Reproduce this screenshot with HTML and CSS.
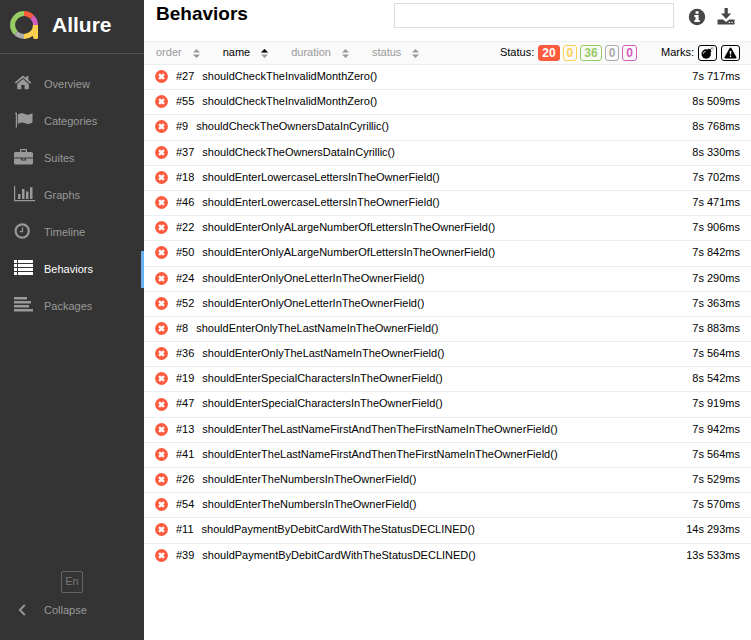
FILE: index.html
```
<!DOCTYPE html>
<html lang="en">
<head>
<meta charset="utf-8">
<title>Allure Report</title>
<link rel="stylesheet" href="styles.css">
</head>
<body>
<svg class="defs" aria-hidden="true">
  <symbol id="fail" viewBox="0 0 14 14"><circle cx="7" cy="7" r="6.9" fill="#fd5a3e"/><path d="M4.400 4.400l5.200 5.200M9.600 4.400L4.400 9.600" stroke="#fff" stroke-width="2.500"/></symbol>
  <symbol id="sort" viewBox="0 0 7 9"><path d="M0 3.6L3.5 0 7 3.6zM0 5.4h7L3.5 9z" fill="#999"/></symbol>
  <symbol id="sort-asc" viewBox="0 0 7 9"><path d="M0 3.6L3.5 0 7 3.6zM0 5.4h7L3.5 9z" fill="#999"/><path d="M0 3.6L3.5 0 7 3.6z" fill="#000"/></symbol>
</svg>
<div class="app">
  <aside class="side">
    <a class="brand" href="#">
      <svg class="logo" viewBox="0 0 28 28" fill="none" stroke-width="5">
        <path d="M14 2.500A11.500 11.500 0 0 1 22.100 5.900" stroke="#fd5a3e"/>
        <path d="M22.100 5.900A11.500 11.500 0 0 1 25.500 14" stroke="#d35ebe"/>
        <path d="M5.900 22.100A11.500 11.500 0 0 1 5.900 5.900 11.500 11.500 0 0 1 14 2.500" stroke="#97cc64"/>
        <path d="M14 25.500A11.500 11.500 0 0 1 5.900 22.100" stroke="#aaa"/>
        <path d="M23 14H28V26.500Q28 28 26.500 28H25Q23 28 23 26V24.800Q19 28 14 28V23Q22.500 22 23 14z" fill="#ffd050"/>
      </svg>
      <span>Allure</span>
    </a>
    <nav class="menu">
      <a class="item" href="#"><svg class="icon" viewBox="0 0 20 16"><path d="M.8 7.600L8.300 1Q9 .5 9.700 1L12 3V1.200H14.400V5.100L17.200 7.600 16.100 8.800 9 2.700 1.900 8.800z"/><path d="M3.200 8.900L9 4 14.800 8.900V14.300H10.600V10H7.400V14.300H3.200z"/></svg>Overview</a>
      <a class="item" href="#"><svg class="icon" viewBox="0 0 20 16"><path d="M1 1.500a1 1 0 0 1 2 0V15.500H1.800V2.500z"/><path d="M3.800 2.600C7 .8 9 .8 11.500 2.200 14 3.400 16 2.400 18.500 1.300V10.500C16 12 13.500 12.500 11 11.200 8.500 10 6.500 10.600 3.800 12z"/></svg>Categories</a>
      <a class="item" href="#"><svg class="icon" viewBox="0 0 20 16"><path fill-rule="evenodd" d="M6 3V1Q6 0 7 0H12Q13 0 13 1V3H17.500Q19 3 19 4.500V8.500H0V4.500Q0 3 1.500 3zM7.300 3H11.700V1.300H7.300zM0 9.500H7V11.500H12V9.500H19V14Q19 15.500 17.500 15.500H1.500Q0 15.500 0 14zM8.200 9.500H10.800V10.500H8.200z"/></svg>Suites</a>
      <a class="item" href="#"><svg class="icon" viewBox="0 0 20 16"><path d="M0 0H1.200V14H21V15.300H0zM4 8H6.500V13H4zM8 3H10.500V13H8zM12 5.500H14.500V13H12zM16 1.200H18.500V13H16z"/></svg>Graphs</a>
      <a class="item" href="#"><svg class="icon" viewBox="0 0 20 16"><circle cx="8.200" cy="8" r="6.600" fill="none" stroke="currentColor" stroke-width="2.200"/><path d="M7.800 4.500H9.100V9.300H5.600V8H7.800z"/></svg>Timeline</a>
      <a class="item active" href="#" aria-current="page"><svg class="icon" viewBox="0 0 20 16"><path d="M0 0H3V3H0zM4 0H19V3H4zM0 4H3V7H0zM4 4H19V7H4zM0 8H3V11H0zM4 8H19V11H4zM0 12H3V15H0zM4 12H19V15H4z"/></svg>Behaviors</a>
      <a class="item" href="#"><svg class="icon" viewBox="0 0 20 16"><path d="M0 0H13V2.600H0zM0 4H17V6.600H0zM0 8H15V10.600H0zM0 12H19V14.600H0z"/></svg>Packages</a>
    </nav>
    <div class="foot">
      <button class="lang" type="button">En</button>
      <button class="collapse" type="button"><svg class="icon" viewBox="0 0 20 16"><path d="M10.800 3L5.800 8 10.800 13" fill="none" stroke="currentColor" stroke-width="1.800"/></svg>Collapse</button>
    </div>
  </aside>
  <main class="main">
    <header class="head">
      <h1>Behaviors</h1>
      <input class="search" type="text" aria-label="Search">
      <button class="tool" type="button" aria-label="Show groups info"><svg viewBox="0 0 18 18"><circle cx="9" cy="9" r="8.200" fill="#484848"/><path d="M7.600 3.200H10.600V5.700H7.600zM6.400 7H10.600V12H11.700V14H6.400V12H7.500V9H6.400z" fill="#fff"/></svg></button>
      <button class="tool" type="button" aria-label="Download CSV"><svg viewBox="0 0 18 18"><path fill-rule="evenodd" d="M7.500 0H10.800V5.500H14.300L9.100 11 4 5.500H7.500zM.5 11.500H6L9.100 14 12.200 11.500H17.500V16.500H.5zM11.700 13.700V15H13V13.700zM14.400 13.700V15H15.700V13.700z" fill="#484848"/></svg></button>
    </header>
    <div class="bar">
      <div class="sorts">
        <button class="sort" type="button">order<svg><use href="#sort"/></svg></button>
        <button class="sort on" type="button">name<svg><use href="#sort-asc"/></svg></button>
        <button class="sort" type="button">duration<svg><use href="#sort"/></svg></button>
        <button class="sort" type="button">status<svg><use href="#sort"/></svg></button>
      </div>
      <div class="filter"><span>Status:</span>
        <button class="pill failed" type="button">20</button>
        <button class="pill broken" type="button">0</button>
        <button class="pill passed" type="button">36</button>
        <button class="pill skipped" type="button">0</button>
        <button class="pill unknown" type="button">0</button>
      </div>
      <div class="filter marks"><span>Marks:</span>
        <button class="pill mark" type="button" aria-label="Flaky"><svg viewBox="0 0 13 12"><circle cx="5.200" cy="7" r="4.700"/><path d="M6.500 3L8 1.500 10.600 4 9 5.700z"/><path d="M9 2.800L10.400 1.400" stroke="#000" stroke-width="1"/><path d="M11 0v1.200M12.900 1.900h-1.100M12.200.5l-.6.6M12 3l-.5-.5" stroke="#666" stroke-width=".7"/><path d="M2.300 6.800Q2.500 4.700 4.600 4.300" fill="none" stroke="#fff" stroke-width=".8"/></svg></button>
        <button class="pill mark" type="button" aria-label="New failed"><svg viewBox="0 0 13 12"><path fill-rule="evenodd" d="M5.700 1Q6.500-.2 7.300 1L12.300 10Q12.700 11.500 11.500 11.500H1.500Q.3 11.500.7 10zM5.600 4L5.900 7.600H7.100L7.400 4zM5.800 8.500V10H7.200V8.500z"/></svg></button>
      </div>
    </div>
    <div class="list" id="list"></div>
  </main>
</div>
<script src="script.js"></script>
</body>
</html>
```
FILE: styles.css
```
* { box-sizing: border-box; }
body { margin: 0; font: 11px/1.2 "Liberation Sans", Arial, sans-serif; color: #000; background: #fff; }
button { font: inherit; color: inherit; background: none; border: 0; padding: 0; margin: 0; cursor: pointer; }
a { color: inherit; text-decoration: none; }
.defs { position: absolute; width: 0; height: 0; }
.app { display: flex; min-height: 100vh; }

.side { flex: 0 0 144px; display: flex; flex-direction: column; background: #343434; color: #999; }
.brand { display: flex; align-items: center; gap: 14px; height: 54px; padding: 0 10px 4px; border-bottom: 1px solid #505050; color: #fff; font-size: 21px; font-weight: bold; }
.logo { width: 28px; height: 28px; }
.menu { display: flex; flex-direction: column; padding-top: 12px; }
.item { display: flex; align-items: center; gap: 10px; height: 37px; padding-left: 14px; }
.item.active { color: #fff; border-right: 3px solid #68b1ee; }
.icon { width: 20px; height: 16px; fill: currentColor; margin-bottom: 3px; overflow: visible; }
.foot { margin-top: auto; display: flex; flex-direction: column; align-items: stretch; padding-bottom: 11px; }
.lang { align-self: center; width: 22px; height: 22px; border: 1px solid #666; border-radius: 2px; color: #777; }
.collapse { display: flex; align-items: center; gap: 10px; height: 36px; padding-left: 14px; }

.main { flex: 1; min-width: 0; }
.head { display: flex; align-items: flex-start; height: 41px; padding: 3px 16px 0 12px; }
h1 { margin: 0 auto 0 0; font-size: 19px; line-height: 22px; }
.search { flex: 0 1 280px; min-width: 0; height: 25px; margin-right: 14px; padding: 0 8px; border: 1px solid #ddd; font: inherit; }
.tool { margin-top: 5px; height: 18px; }
.tool + .tool { margin-left: 11px; }
.tool svg { display: block; width: 18px; height: 18px; }

.bar { display: flex; align-items: center; height: 24px; padding: 0 11px 0 12px; border: solid #eceff1; border-width: 1px 0; background: #fafafa; }
.sorts { display: flex; gap: 23px; margin-right: auto; color: #999; }
.sort { display: flex; align-items: center; gap: 11px; }
.sort.on { color: #000; }
.sort svg { width: 7px; height: 9px; }
.filter { display: flex; align-items: center; gap: 3px; }
.filter span { margin-right: 1px; }
.marks { gap: 4px; margin-left: 24px; }
.marks span { margin-right: 0; }
.pill { height: 16px; padding: 0 3px; border: 1px solid; border-radius: 3px; font-size: 12px; font-weight: bold; line-height: 14px; }
.failed { background: #fd5a3e; border-color: #fd5a3e; color: #fff; }
.broken { color: #ffd050; }
.passed { color: #97cc64; }
.skipped { color: #aaa; }
.unknown { color: #d35ebe; }
.mark { color: #000; padding: 0 2px; }
.mark svg { display: block; width: 13px; height: 12px; }

.row { display: flex; align-items: center; gap: 8px; padding: 5px 11px 6px; border-bottom: 1px solid #eceff1; }
.row:last-child { border-color: transparent; }
.row svg { width: 13px; height: 13px; margin: -1px 0; }
.row .time { margin-left: auto; }
```
FILE: script.js
```
const rows = [
  [27, "shouldCheckTheInvalidMonthZero()", "7s 717ms"],
  [55, "shouldCheckTheInvalidMonthZero()", "8s 509ms"],
  [9, "shouldCheckTheOwnersDataInCyrillic()", "8s 768ms"],
  [37, "shouldCheckTheOwnersDataInCyrillic()", "8s 330ms"],
  [18, "shouldEnterLowercaseLettersInTheOwnerField()", "7s 702ms"],
  [46, "shouldEnterLowercaseLettersInTheOwnerField()", "7s 471ms"],
  [22, "shouldEnterOnlyALargeNumberOfLettersInTheOwnerField()", "7s 906ms"],
  [50, "shouldEnterOnlyALargeNumberOfLettersInTheOwnerField()", "7s 842ms"],
  [24, "shouldEnterOnlyOneLetterInTheOwnerField()", "7s 290ms"],
  [52, "shouldEnterOnlyOneLetterInTheOwnerField()", "7s 363ms"],
  [8, "shouldEnterOnlyTheLastNameInTheOwnerField()", "7s 883ms"],
  [36, "shouldEnterOnlyTheLastNameInTheOwnerField()", "7s 564ms"],
  [19, "shouldEnterSpecialCharactersInTheOwnerField()", "8s 542ms"],
  [47, "shouldEnterSpecialCharactersInTheOwnerField()", "7s 919ms"],
  [13, "shouldEnterTheLastNameFirstAndThenTheFirstNameInTheOwnerField()", "7s 942ms"],
  [41, "shouldEnterTheLastNameFirstAndThenTheFirstNameInTheOwnerField()", "7s 564ms"],
  [26, "shouldEnterTheNumbersInTheOwnerField()", "7s 529ms"],
  [54, "shouldEnterTheNumbersInTheOwnerField()", "7s 570ms"],
  [11, "shouldPaymentByDebitCardWithTheStatusDECLINED()", "14s 293ms"],
  [39, "shouldPaymentByDebitCardWithTheStatusDECLINED()", "13s 533ms"]
];
document.getElementById("list").innerHTML = rows.map(([n, name, time]) =>
  `<a class="row" href="#"><svg><use href="#fail"/></svg><span>#${n}</span><span>${name}</span><span class="time">${time}</span></a>`
).join("");
```
